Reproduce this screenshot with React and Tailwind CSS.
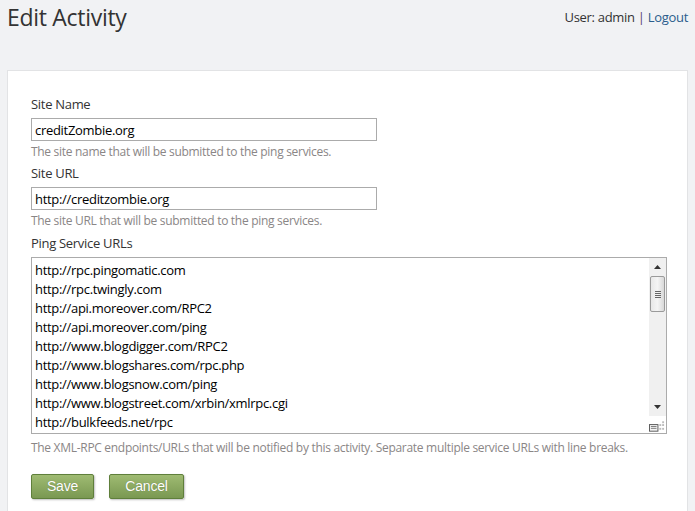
import React from "react";

const urls = [
  "http://rpc.pingomatic.com",
  "http://rpc.twingly.com",
  "http://api.moreover.com/RPC2",
  "http://api.moreover.com/ping",
  "http://www.blogdigger.com/RPC2",
  "http://www.blogshares.com/rpc.php",
  "http://www.blogsnow.com/ping",
  "http://www.blogstreet.com/xrbin/xmlrpc.cgi",
  "http://bulkfeeds.net/rpc",
];

function Btn({ children, w }) {
  return (
    <button
      className={`${w} h-[25px] rounded-[2px] border border-[#5f7f3b] bg-gradient-to-b from-[#9fbb72] to-[#7a9852] text-white text-[14px] tracking-[-0.2px] shadow-[1px_1px_2px_rgba(0,0,0,0.25)] [text-shadow:0_0_1px_rgba(0,0,0,0.3)]`}
      style={{ fontFamily: '"Liberation Sans Narrow","Liberation Sans",Arial,sans-serif' }}
    >
      {children}
    </button>
  );
}

export default function App() {
  return (
    <div
      className="min-h-[511px] bg-[#f1f2f4] text-[#333] overflow-hidden tracking-[-0.3px]"
      style={{ fontFamily: '"Open Sans","Noto Sans",sans-serif' }}
    >
      <div className="flex justify-between items-start h-[70px] px-[7px]">
        <h1 className="text-[23px] leading-[34px] text-[#333] tracking-[-0.3px]">Edit Activity</h1>
        <div className="text-[13px] leading-[34px]">
          <span>User: admin </span>
          <span className="text-[#5b3b6d]">|</span>{" "}
          <a className="text-[#2a5d8c]">Logout</a>
        </div>
      </div>
      <div className="mx-[7px] bg-white border border-[#e2e3e5] pl-[23px] pt-[23px] pb-[40px] min-h-[460px]">
        <div className="text-[13px] leading-[20px]">Site Name</div>
        <input
          className="mt-[4px] block w-[346px] h-[23px] border border-[#ababab] px-[3px] text-[13px] text-black outline-none tracking-[-0.3px]"
          defaultValue="creditZombie.org"
        />
        <div className="text-[12px] leading-[22px] text-[#8a8686]">The site name that will be submitted to the ping services.</div>
        <div className="text-[13px] leading-[20px]">Site URL</div>
        <input
          className="mt-[4px] block w-[346px] h-[23px] border border-[#ababab] px-[3px] text-[13px] text-black outline-none tracking-[-0.3px]"
          defaultValue="http://creditzombie.org"
        />
        <div className="text-[12px] leading-[22px] text-[#8a8686]">The site URL that will be submitted to the ping services.</div>
        <div className="mt-[1px] text-[13px] leading-[20px]">Ping Service URLs</div>
        <div className="mt-[4px] flex w-[636px] h-[177px] border border-[#ababab]">
          <div className="flex-1 pl-[3px] pt-[3px] text-[13px] leading-[19px] text-black">
            {urls.map((u) => (
              <div key={u}>{u}</div>
            ))}
          </div>
          <div className="w-[17px] flex flex-col bg-[#f0f0f0]">
            <div className="h-[18px] flex items-center justify-center">
              <svg width="7" height="4" viewBox="0 0 7 4"><path d="M3.5 0L7 4H0z" fill="#333" /></svg>
            </div>
            <div className="h-[36px] mx-[1px] rounded-[2px] border border-[#9a9a9a] bg-gradient-to-r from-[#e8e8e8] via-[#f4f4f4] to-[#d8d8d8] flex flex-col items-center justify-center gap-[1px]">
              <div className="w-[6px] h-px bg-[#666]" />
              <div className="w-[6px] h-px bg-[#666]" />
              <div className="w-[6px] h-px bg-[#666]" />
              <div className="w-[6px] h-px bg-[#666]" />
            </div>
            <div className="flex-1" />
            <div className="h-[18px] flex items-center justify-center">
              <svg width="7" height="4" viewBox="0 0 7 4"><path d="M0 0H7L3.5 4z" fill="#333" /></svg>
            </div>
            <div className="h-[17px] bg-white flex items-end justify-end pr-[1px] pb-[1px]">
              <svg width="17" height="12" viewBox="0 0 17 12">
                <rect x="0.5" y="4.5" width="9" height="7" fill="#f4f4f4" stroke="#555" />
                <path d="M2 6.5H8M2 8.5H8" stroke="#777" />
                <rect x="14" y="1" width="2" height="2" fill="#bbb" />
                <rect x="11" y="4" width="2" height="2" fill="#bbb" />
                <rect x="14" y="4" width="2" height="2" fill="#bbb" />
                <rect x="11" y="8" width="2" height="2" fill="#bbb" />
                <rect x="14" y="8" width="2" height="2" fill="#bbb" />
              </svg>
            </div>
          </div>
        </div>
        <div className="mt-[3px] text-[12px] leading-[22px] text-[#8a8686]">
          The XML-RPC endpoints/URLs that will be notified by this activity. Separate multiple service URLs with line breaks.
        </div>
        <div className="mt-[15px] flex gap-[15px]">
          <Btn w="w-[63px]">Save</Btn>
          <Btn w="w-[75px]">Cancel</Btn>
        </div>
      </div>
    </div>
  );
}
